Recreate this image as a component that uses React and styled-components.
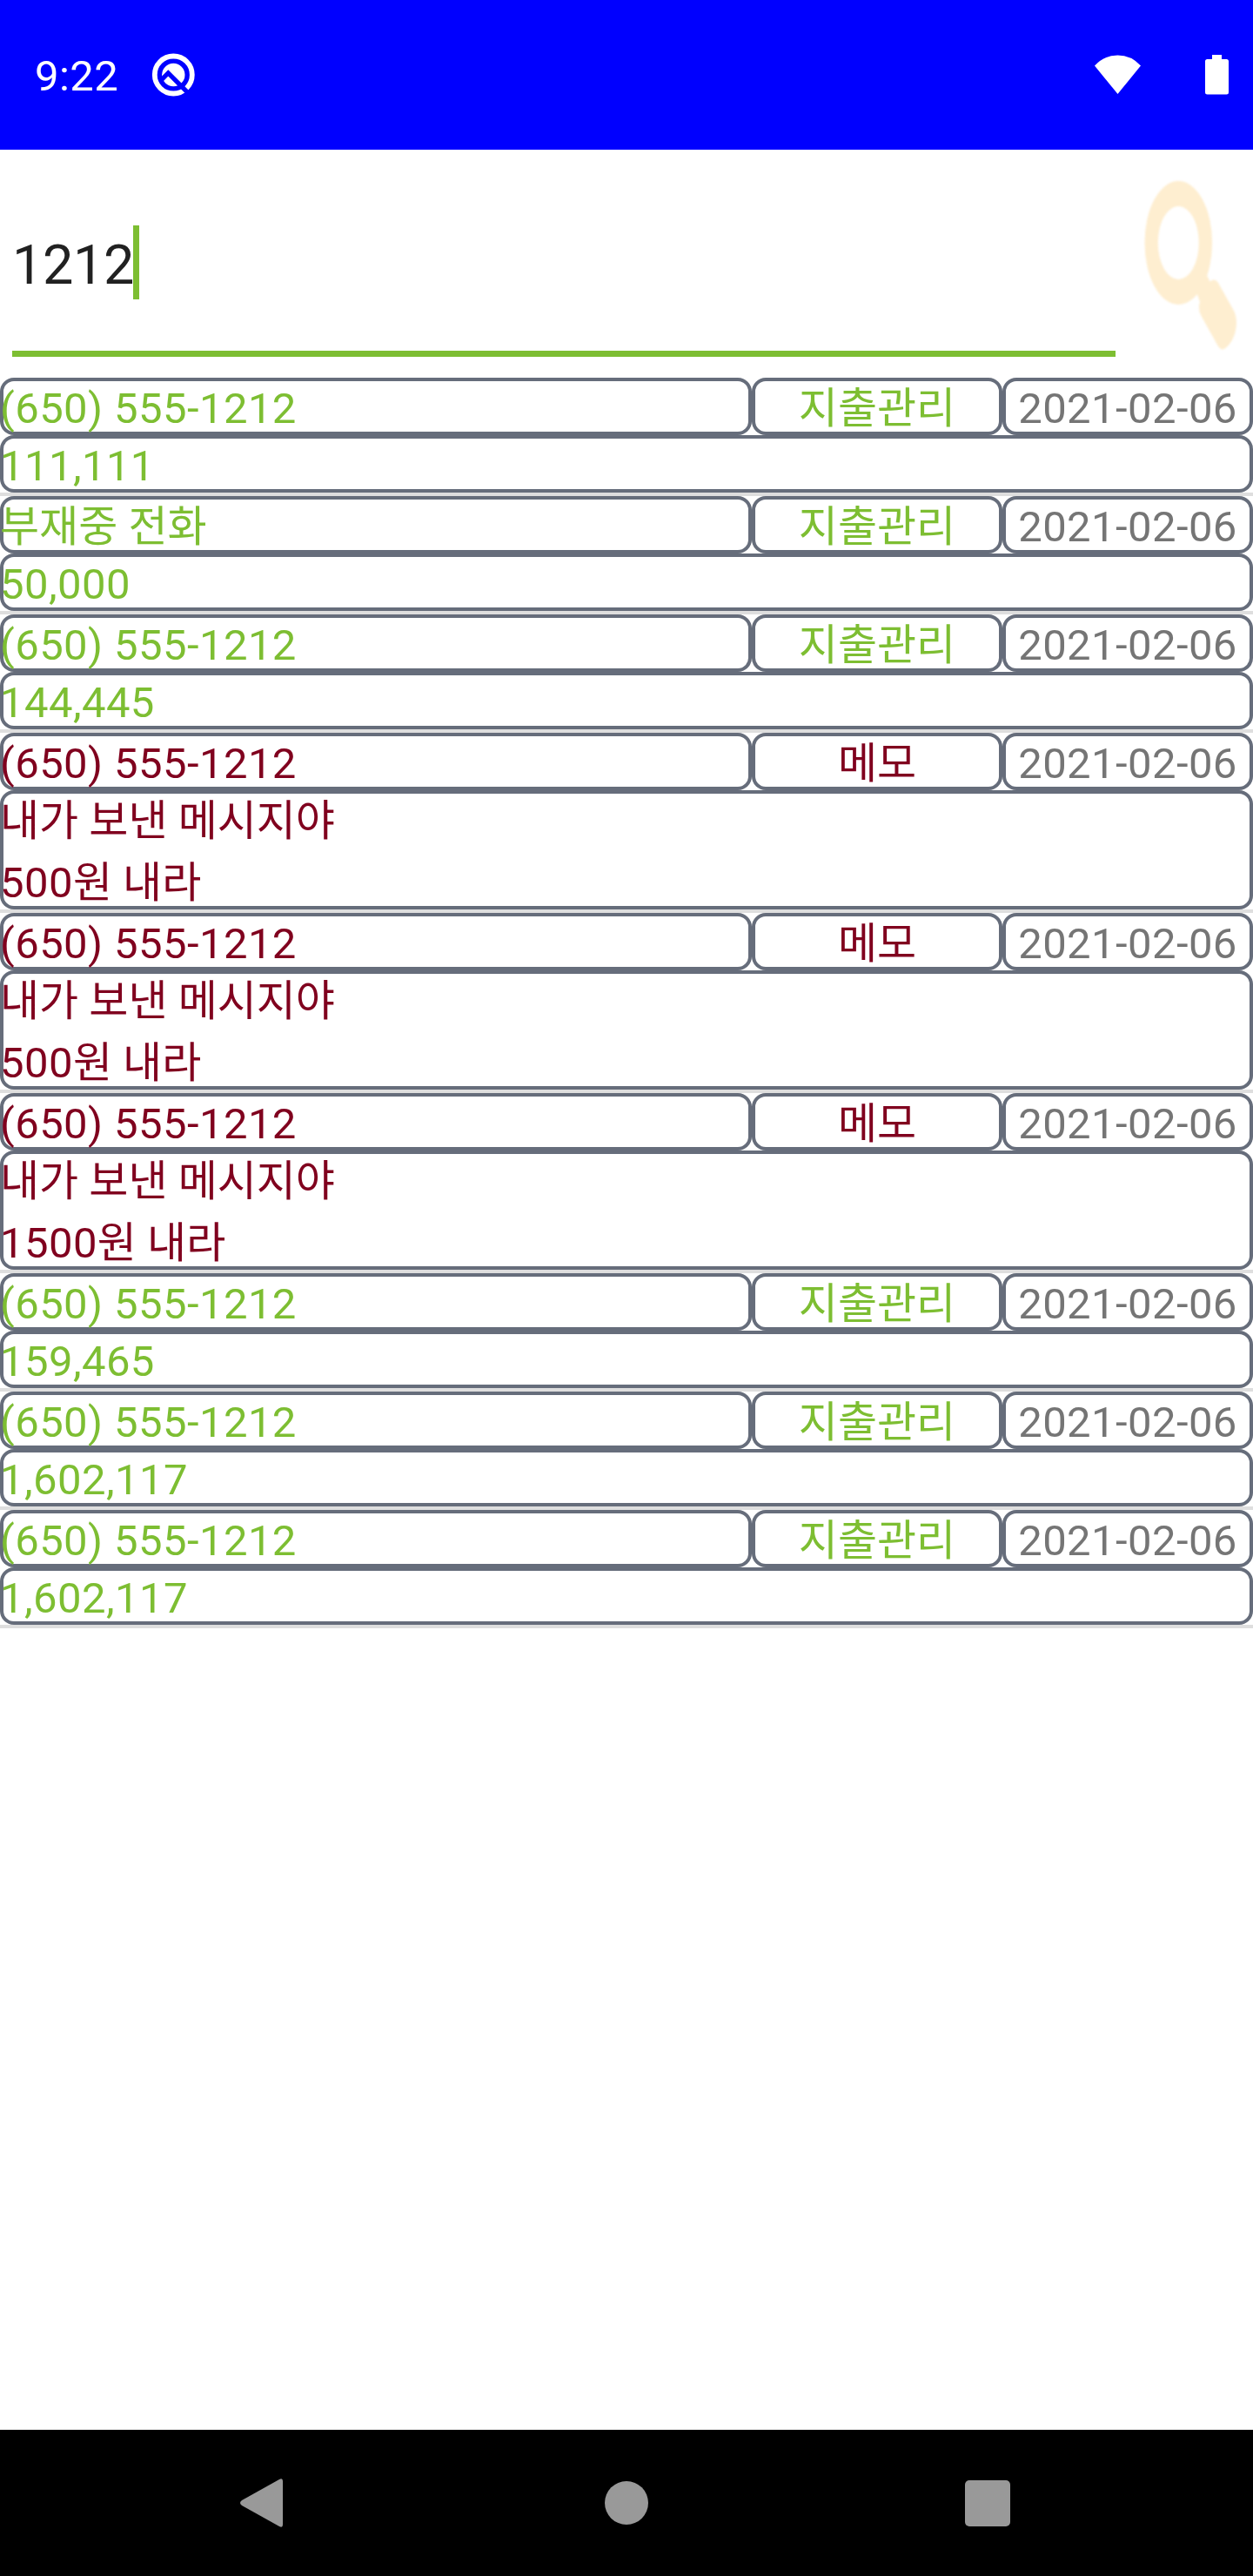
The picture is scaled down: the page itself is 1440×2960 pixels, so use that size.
import React, { useState } from 'react';
import styled, { createGlobalStyle } from 'styled-components';

const GREEN = '#7dbe32';
const WINE = '#80001e';

const GlobalStyle = createGlobalStyle`
  body {
    margin: 0;
    background-color: #ffffff;
    font-family: Roboto, "Noto Sans CJK KR", sans-serif;
  }
`;

const Screen = styled.div`
  width: 1440px;
  height: 2960px;
  display: flex;
  flex-direction: column;
  overflow: hidden;
`;

const StatusBar = styled.header`
  height: 172px;
  box-sizing: border-box;
  padding: 0 28px 0 40px;
  display: flex;
  align-items: center;
  background-color: #0000ff;
  color: white;
`;

const Clock = styled.span`
  width: 134px;
  font-size: 49px;
  line-height: 58px;
  letter-spacing: 0.45px;
  padding-top: 4px;
`;

const StatusIcons = styled.div`
  margin-left: auto;
  display: flex;
  align-items: center;
  gap: 74px;
`;

const SearchBar = styled.div`
  height: 262px;
  display: flex;
`;

const SearchField = styled.div`
  width: 1268px;
  height: 231px;
  margin: 0 0 0 14px;
  display: flex;
  align-items: center;
  border-bottom: 7px solid ${GREEN};
`;

const SearchText = styled.span`
  font-size: 63px;
  line-height: 74px;
  letter-spacing: -0.37px;
  padding-top: 34px;
  color: #212121;
`;

const Caret = styled.span`
  width: 7px;
  height: 85px;
  margin-top: 28px;
  margin-left: -1px;
  background-color: ${GREEN};
`;

const SearchButton = styled.button`
  margin: 28px 0 0 26px;
  padding: 0;
  border: none;
  background: none;
  height: 206px;
  cursor: pointer;
`;

const MagnifierIcon = styled.svg`
  display: block;
  filter: blur(0.8px);
`;

const List = styled.ul`
  flex: 1;
  margin: 0;
  padding: 0;
  list-style: none;
`;

const Item = styled.li`
  border-bottom: 4px solid #dedede;
  font-size: 49px;
  line-height: 71px;
  color: ${(props) => props.$color};
`;

const ItemHeader = styled.div`
  display: grid;
  grid-template-columns: 3fr 1fr 1fr;
`;

/* El borde va por dentro para que el texto empiece encima de él */
const Cell = styled.div`
  height: ${(props) => (props.$lines || 1) * 71 - 5}px;
  border-radius: 16px;
  box-shadow: inset 0 0 0 4px #666d7b;
  white-space: pre;
  text-align: ${(props) => (props.$center ? 'center' : 'left')};
`;

const DateCell = styled(Cell)`
  color: #757575;
`;

const Digits = styled.span`
  letter-spacing: 0.42px;
`;

const NavBar = styled.nav`
  height: 168px;
  display: grid;
  grid-template-columns: repeat(3, 414px);
  justify-content: center;
  align-items: center;
  justify-items: center;
  background-color: black;
`;

const messages = [
  { name: '(650) 555-1212', kind: '지출관리', body: '111,111' },
  { name: '부재중 전화', kind: '지출관리', body: '50,000' },
  { name: '(650) 555-1212', kind: '지출관리', body: '144,445' },
  { name: '(650) 555-1212', kind: '메모', body: '내가 보낸 메시지야\n500원 내라' },
  { name: '(650) 555-1212', kind: '메모', body: '내가 보낸 메시지야\n500원 내라' },
  { name: '(650) 555-1212', kind: '메모', body: '내가 보낸 메시지야\n1500원 내라' },
  { name: '(650) 555-1212', kind: '지출관리', body: '159,465' },
  { name: '(650) 555-1212', kind: '지출관리', body: '1,602,117' },
  { name: '(650) 555-1212', kind: '지출관리', body: '1,602,117' },
];

// Las cifras llevan un poco más de espacio que el coreano
function Text({ value }) {
  return value
    .split(/([(\d][\d() ,-]*)/)
    .map((part, index) => (index % 2 ? <Digits key={index}>{part}</Digits> : part));
}

function MessageItem({ message }) {
  return (
    <Item $color={message.kind === '메모' ? WINE : GREEN}>
      <ItemHeader>
        <Cell><Text value={message.name} /></Cell>
        <Cell $center>{message.kind}</Cell>
        <DateCell $center><Text value="2021-02-06" /></DateCell>
      </ItemHeader>
      <Cell $lines={message.body.split('\n').length}><Text value={message.body} /></Cell>
    </Item>
  );
}

function App() {
  const [query] = useState('1212');

  return (
    <Screen>
      <GlobalStyle />
      <StatusBar>
        <Clock>9:22</Clock>
        <svg width="50" height="50" viewBox="0 0 50 50">
          <circle cx="25.3" cy="25" r="21.5" fill="none" stroke="white" strokeWidth="5.8" />
          <circle cx="25.3" cy="25" r="13.2" fill="white" />
          <path d="M10 32.300L19.300 23L46 49.700" fill="none" stroke="#0000ff" strokeWidth="5.2" />
        </svg>
        <StatusIcons>
          <svg width="53" height="46" viewBox="0 0 53 46">
            <path d="M26.500 45L0 12.500Q11 0.500 26.500 0.500Q42 0.500 53 12.500Z" fill="white" />
          </svg>
          <svg width="27" height="46" viewBox="0 0 27 46">
            <path d="M8 0H19V5H24.500Q27 5 27 7.500V43Q27 45.500 24.500 45.500H2.500Q0 45.500 0 43V7.500Q0 5 2.500 5H8Z" fill="white" />
          </svg>
        </StatusIcons>
      </StatusBar>
      <SearchBar>
        <SearchField>
          <SearchText>{query}</SearchText>
          <Caret />
        </SearchField>
        <SearchButton aria-label="검색">
          <MagnifierIcon width="120" height="206" viewBox="0 0 120 206" fill="#feeed0">
            <path
              fillRule="evenodd"
              d="M46.300 8A38.800 71 0 1 0 46.300 150A38.800 71 0 1 0 46.300 8ZM46.300 37A23.500 42 0 1 1 46.300 121A23.500 42 0 1 1 46.300 37Z"
            />
            <path d="M66 133L77 112L82.500 123.500Q88 119 92 125L110.500 158Q115 168 111.500 182Q108 194 101 199.500Q96 204 92 198L73 164Q68 155 71 147Z" />
          </MagnifierIcon>
        </SearchButton>
      </SearchBar>
      <List>
        {messages.map((message, index) => (
          <MessageItem key={index} message={message} />
        ))}
      </List>
      <NavBar>
        <svg width="61" height="56" viewBox="0 0 61 56">
          <path d="M45 1Q49 -1 49 3V53Q49 57 45 55L2 31Q-2 28 2 25Z" fill="#999999" />
        </svg>
        <svg width="50" height="50" viewBox="0 0 50 50">
          <circle cx="25" cy="25" r="25" fill="#999999" />
        </svg>
        <svg width="54" height="53" viewBox="0 0 54 53">
          <rect x="2" width="52" height="53" rx="5" fill="#999999" />
        </svg>
      </NavBar>
    </Screen>
  );
}

export default App;
